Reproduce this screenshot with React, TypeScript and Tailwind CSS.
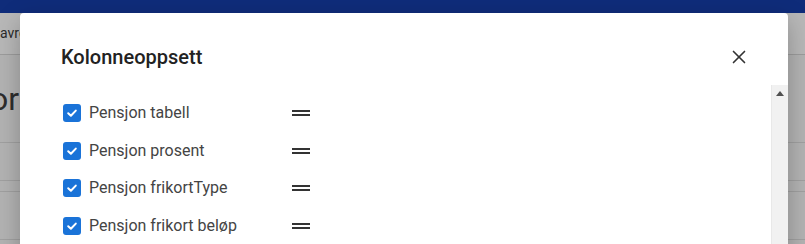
import { X } from "lucide-react";

const columns = [
  "Pensjon tabell",
  "Pensjon prosent",
  "Pensjon frikortType",
  "Pensjon frikort beløp",
];

const CheckBox = () => (
  <span className="w-[18px] h-[18px] rounded-[3px] bg-[#1a73d8] flex items-center justify-center shrink-0">
    <svg width="12" height="12" viewBox="0 0 12 12" fill="none">
      <path d="M2.2 6.2 L4.9 8.8 L9.8 3.6" stroke="white" strokeWidth="2" strokeLinecap="round" strokeLinejoin="round" />
    </svg>
  </span>
);

const DragHandle = () => (
  <span className="flex flex-col gap-[2px] w-[18px]">
    <span className="h-[2px] bg-[#333]" />
    <span className="h-[2px] bg-[#333]" />
  </span>
);

const ColumnRow = ({ label }: { label: string }) => (
  <div className="h-[37.7px] flex items-center">
    <CheckBox />
    <span className="ml-2 w-[203px] text-[16px] text-[#444]">{label}</span>
    <DragHandle />
  </div>
);

export default function App() {
  return (
    <div className="relative w-[805px] h-[244px] overflow-hidden bg-[#b3b3b3] font-['Roboto',sans-serif]">
      {/* dimmed page behind the dialog */}
      <div className="h-[13px] bg-[#0f2c7a]" />
      <div className="h-[42px] bg-[#b8b8b8] border-b border-[#9c9c9c] flex items-center">
        <span className="ml-0 text-[14px] text-[#2b2b2b]">avre</span>
      </div>
      <div className="h-[88px] border-b border-[#a0a0a0] flex items-center">
        <span className="ml-[-10px] text-[32px] text-[#2d2d2d]">or</span>
      </div>
      <div className="h-[38px] border-b border-[#a0a0a0]" />
      <div className="h-[11px] border-b border-[#a0a0a0]" />
      <div className="h-[48px] border-b border-[#a0a0a0]" />

      <div className="absolute left-[20px] top-[13px] w-[768px] h-[260px] bg-white rounded-[4px] shadow-[0_8px_24px_rgba(0,0,0,0.25)] flex flex-col">
        <div className="h-[72px] flex items-start justify-between pl-[41px] pr-[38px] pt-[31px]">
          <h2 className="text-[20px] font-medium text-[#222] leading-[26px]">Kolonneoppsett</h2>
          <X className="w-[22px] h-[22px] text-[#333] mt-[2px]" strokeWidth={1.8} />
        </div>
        <div className="flex flex-1">
          <div className="flex-1 pl-[43px] pt-[9px]">
            {columns.map((c) => (
              <ColumnRow key={c} label={c} />
            ))}
          </div>
          <div className="w-[17px] bg-[#f1f1f1] border-l border-[#e8e8e8] flex justify-center pt-[6px]">
            <svg width="8" height="5" viewBox="0 0 8 5">
              <path d="M0 5 L4 0 L8 5 Z" fill="#505050" />
            </svg>
          </div>
        </div>
      </div>
    </div>
  );
}
